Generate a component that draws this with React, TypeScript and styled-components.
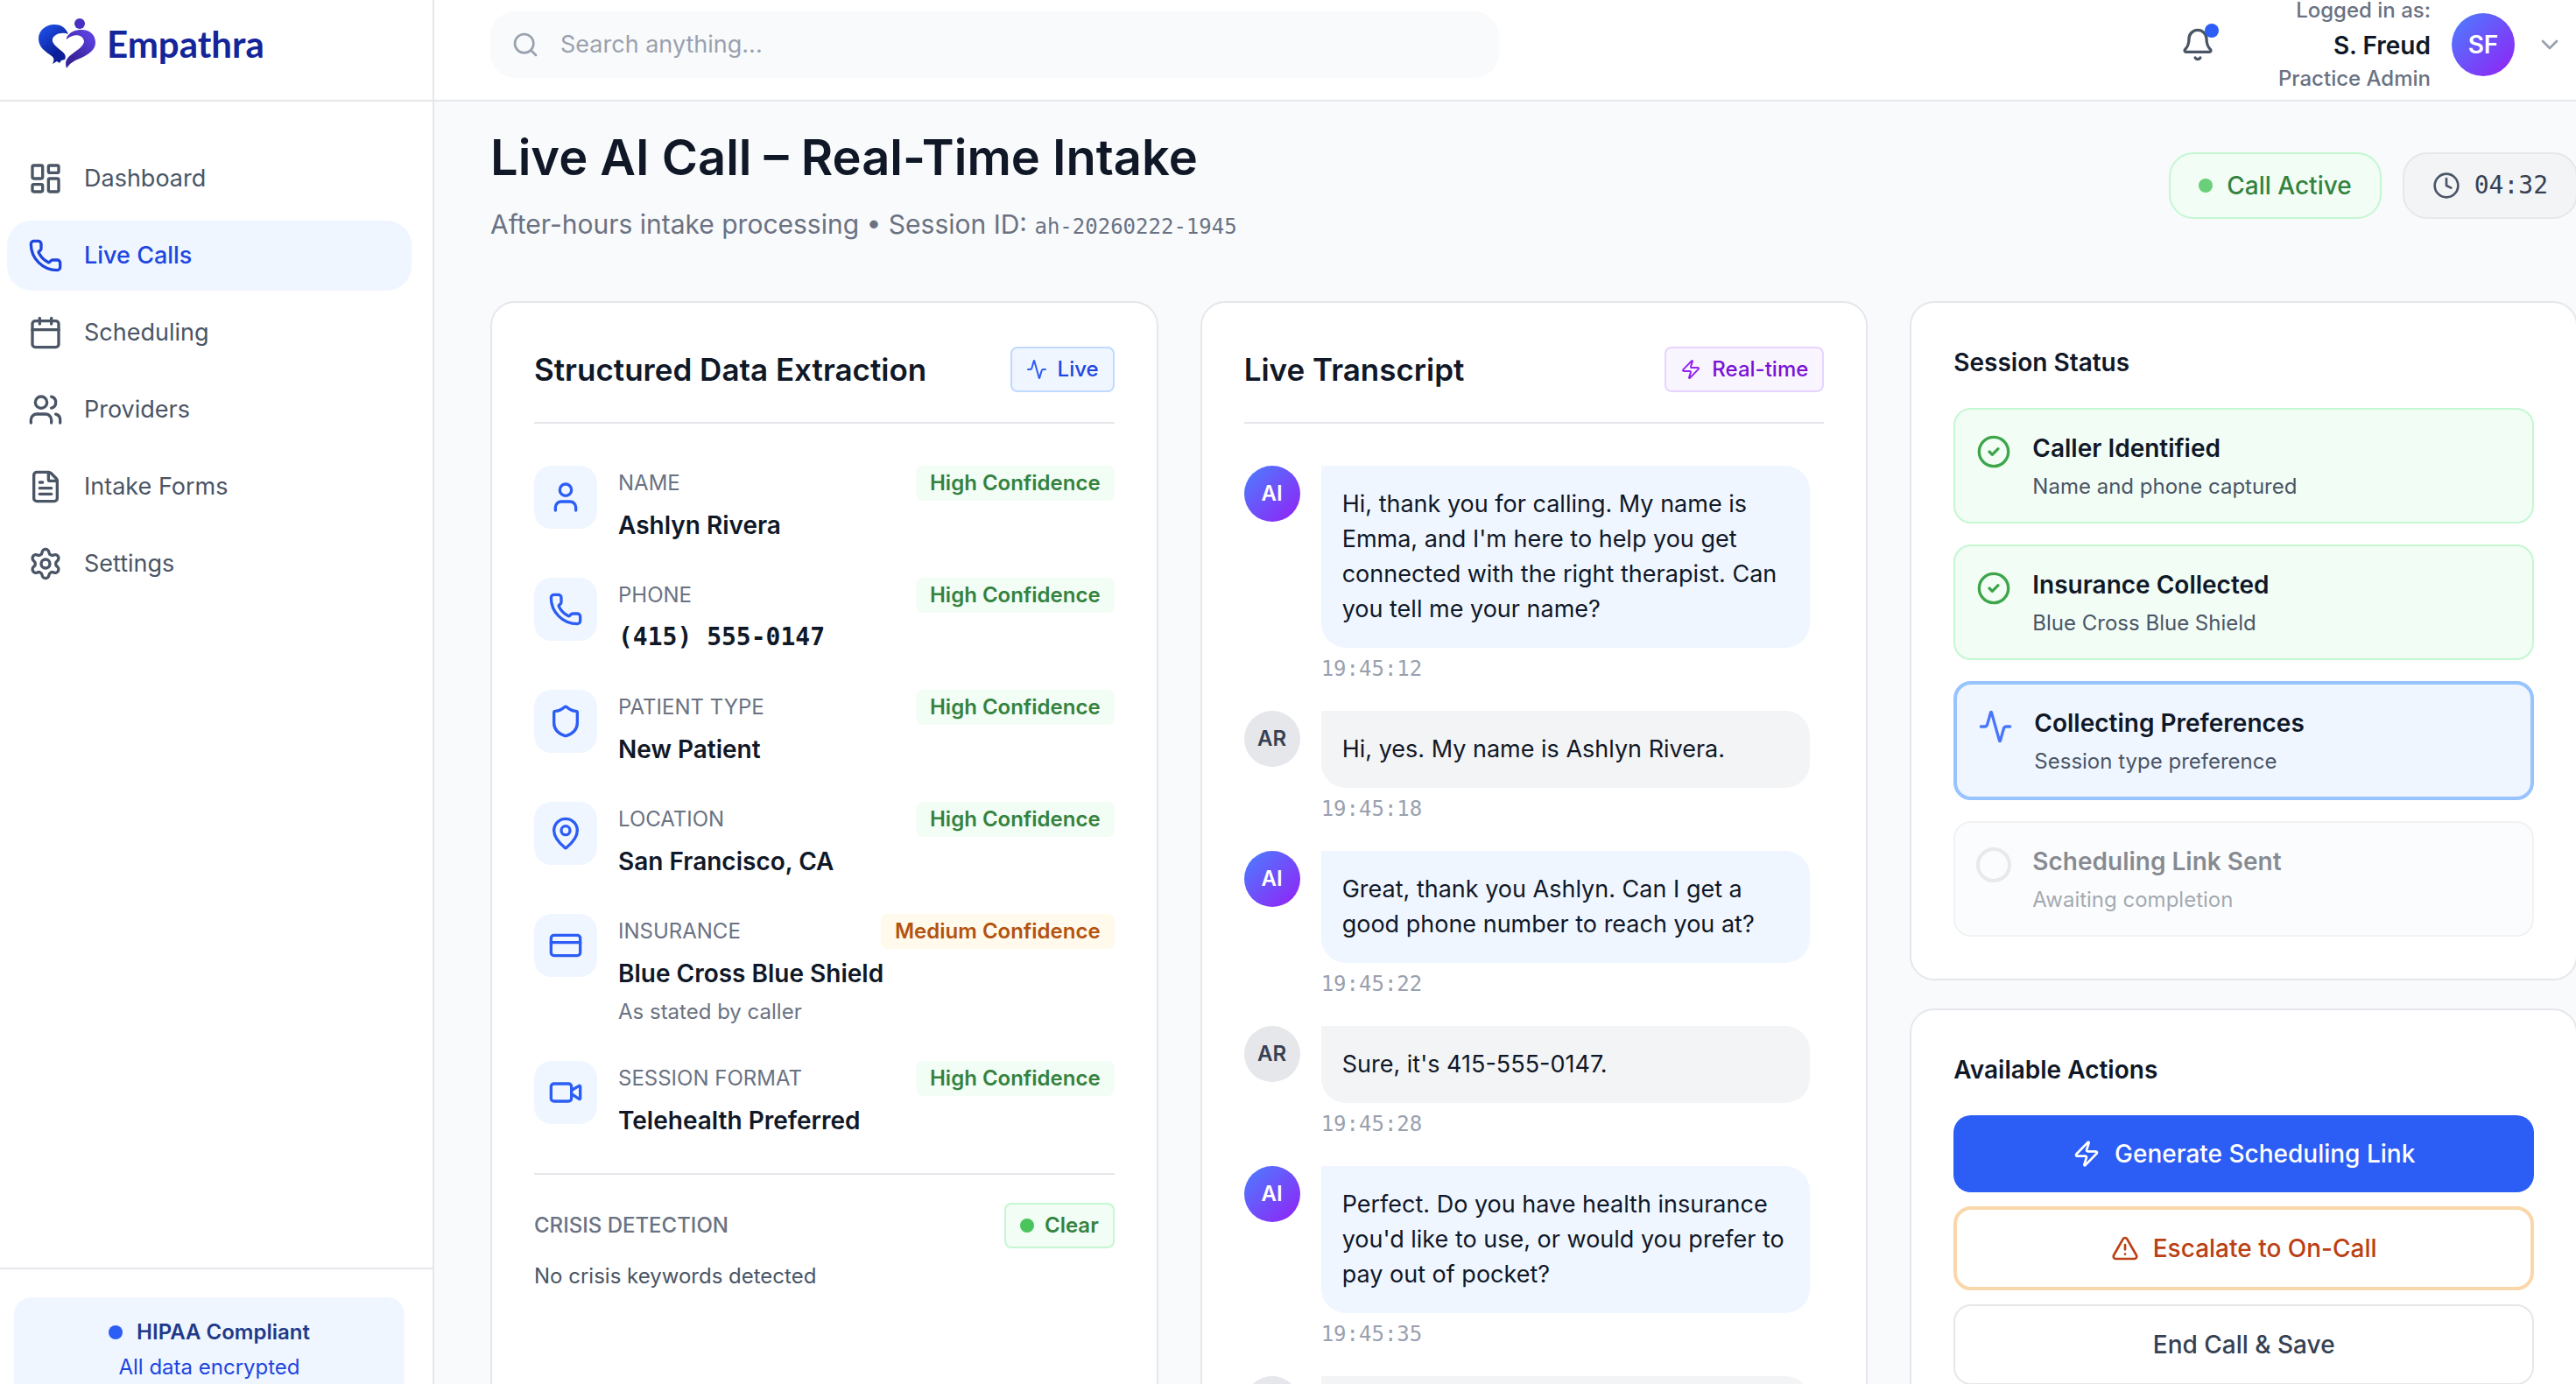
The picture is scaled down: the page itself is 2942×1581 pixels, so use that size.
import React from 'react';
import styled, { createGlobalStyle, css } from 'styled-components';
import {
  Activity, Bell, Calendar, ChevronDown, CircleCheck, Clock, CreditCard, FileText, LayoutDashboard,
  MapPin, Phone, Search, Settings, Shield, TriangleAlert, User, Users, Video, Zap,
} from 'lucide-react';

const c = {
  ink: '#101828', dark: '#364153', body: '#4a5565', muted: '#6a7282', faint: '#99a1af',
  line: '#e5e7eb', page: '#f9fafc', blue: '#2c5df5', blueText: '#2046e0', blueSoft: '#eff6ff',
  green: '#348240', greenSoft: '#f2fdf5', greenLine: '#c4f7d2',
};
const sans = `Inter, "Liberation Sans", sans-serif`;
const mono = `"DejaVu Sans Mono", "Liberation Mono", monospace`;
const gradient = 'linear-gradient(135deg, #4a80ff, #9320f5)';

const Global = createGlobalStyle`
  *, *::before, *::after { box-sizing: border-box; }
  html, body { margin: 0; height: 100%; overflow: hidden; }
  body { font-family: ${sans}; font-size: 28px; line-height: 40px; color: ${c.ink}; background: ${c.page}; }
  h1, h2, h3, p, ul, ol, dl, dd { margin: 0; padding: 0; }
  ul, ol { list-style: none; }
  button, input { font: inherit; color: inherit; }
  svg { flex: none; display: block; }
`;

const Shell = styled.div`display: flex; height: 100vh; overflow: hidden;`;
const Sidebar = styled.aside`
  flex: none; width: 496px; display: flex; flex-direction: column;
  background: #fff; border-right: 2px solid ${c.line};
`;
const Brand = styled.a`
  display: flex; align-items: center; gap: 12px; height: 116px; padding: 0 44px 14px;
  border-bottom: 2px solid ${c.line}; color: #14259a; text-decoration: none;
  font: 700 42px/48px Lato, "Open Sans", sans-serif;
`;
const Nav = styled.nav`flex: 1; padding: 48px 24px 48px 8px;`;
const NavList = styled.ul`display: flex; flex-direction: column; gap: 8px;`;
const NavLink = styled.a<{ $active?: boolean }>`
  display: flex; align-items: center; gap: 24px; height: 80px; padding: 0 24px; border-radius: 28px;
  text-decoration: none; color: ${p => (p.$active ? c.blueText : c.body)}; font-size: 27px;
  background: ${p => (p.$active ? c.blueSoft : 'transparent')};
  font-weight: ${p => (p.$active ? 500 : 400)};
`;
const SideFooter = styled.div`
  flex: none; height: 133px; padding: 32px 32px 32px 16px; border-top: 2px solid ${c.line};
`;
const Compliance = styled.div`
  padding: 24px; border-radius: 20px; background: ${c.blueSoft}; color: ${c.blueText};
  display: flex; flex-direction: column; align-items: center; gap: 8px; font-size: 24px; line-height: 32px;
`;
const ComplianceTitle = styled.strong`
  display: flex; align-items: center; gap: 16px; font-weight: 600; color: #1f3a8a;
`;
const Dot = styled.span<{ $color: string }>`
  flex: none; width: 16px; height: 16px; border-radius: 50%; background: ${p => p.$color};
`;

const Column = styled.div`flex: 1; min-width: 0; display: flex; flex-direction: column;`;
const TopBar = styled.header`
  flex: none; height: 116px; display: flex; align-items: center; justify-content: space-between;
  padding: 0 14px 12px 64px; background: #fff; border-bottom: 2px solid ${c.line};
`;
const SearchBox = styled.label`
  display: flex; align-items: center; gap: 24px; width: 1152px; height: 76px; padding: 0 24px;
  border-radius: 28px; background: ${c.page}; color: ${c.faint};
  input { flex: 1; border: 0; outline: 0; background: none; padding: 0; color: ${c.ink}; font-size: 27px; }
  input::placeholder { color: ${c.faint}; opacity: 1; }
`;
const TopActions = styled.div`display: flex; align-items: center; gap: 56px;`;
const BellButton = styled.button`
  position: relative; display: grid; place-items: center; width: 72px; height: 72px;
  border: 0; background: none; color: ${c.body}; padding: 0;
  ${Dot} { position: absolute; top: 12px; right: 12px; }
`;
const UserMenu = styled.button`
  display: flex; align-items: center; gap: 24px; border: 0; background: none; padding: 0; color: ${c.faint};
`;
const UserText = styled.span`
  display: flex; flex-direction: column; text-align: right; font-size: 24px; line-height: 24px;
  font-weight: 500; color: ${c.muted};
  strong { padding-top: 2px; font-size: 28px; line-height: 52px; font-weight: 600; color: ${c.ink}; }
`;
const Avatar = styled.span<{ $size: number; $ai?: boolean }>`
  flex: none; display: grid; place-items: center; width: ${p => p.$size}px; height: ${p => p.$size}px;
  border-radius: 50%; font-weight: 600; font-size: ${p => (p.$size > 64 ? 28 : 24)}px;
  ${p => (p.$ai ? css`background: ${gradient}; color: #fff;` : css`background: ${c.line}; color: ${c.dark};`)}
`;

const Main = styled.main`
  flex: 1; min-height: 0; margin-right: -2px; padding: 28px 0 0 64px;
  display: flex; flex-direction: column; gap: 64px;
`;
const PageHead = styled.div`flex: none; display: flex; justify-content: space-between; align-items: center;`;
const Title = styled.h1`font-size: 56px; line-height: 72px; font-weight: 600;`;
const Subtitle = styled.p`
  margin-top: 16px; font-size: 30px; line-height: 48px; color: ${c.muted};
  code { font-family: ${mono}; font-size: 24px; line-height: 24px; }
`;
const Pills = styled.div`display: flex; gap: 24px;`;
const Pill = styled.div<{ $live?: boolean }>`
  display: flex; align-items: center; gap: 16px; height: 76px; padding: 0 32px; border-radius: 28px;
  font-weight: 500; border: 2px solid ${p => (p.$live ? c.greenLine : c.line)};
  background: ${p => (p.$live ? c.greenSoft : '#f3f4f6')}; color: ${p => (p.$live ? c.green : c.body)};
  time { font-family: ${mono}; font-weight: 400; color: ${c.dark}; }
`;
const Grid = styled.div`
  flex: none; display: grid; grid-template-columns: repeat(3, minmax(0, 1fr)); gap: 48px; align-items: stretch;
`;
const Stack = styled.div`display: flex; flex-direction: column; gap: 32px;`;
const Card = styled.section`
  background: #fff; border: 2px solid ${c.line}; border-radius: 28px; padding: 48px;
`;
const CardHead = styled.div`
  display: flex; justify-content: space-between; align-items: center; padding-bottom: 32px;
  border-bottom: 2px solid ${c.line}; margin-bottom: 48px;
`;
const CardTitle = styled.h2`font-size: 35px; line-height: 56px; font-weight: 600;`;
const SmallTitle = styled.h2`font-size: 28px; line-height: 40px; font-weight: 600; margin-bottom: 32px;`;

const tagTone = {
  blue: css`background: ${c.blueSoft}; border-color: #bfd9ff; color: ${c.blueText}; svg { color: ${c.blue}; }`,
  purple: css`background: #f9f5ff; border-color: #e6d4ff; color: #7a12d6; svg { color: #9323f5; }`,
  green: css`background: ${c.greenSoft}; border-color: ${c.greenLine}; color: ${c.green}; font-weight: 600;`,
};
const Tag = styled.span<{ $tone: keyof typeof tagTone }>`
  display: inline-flex; align-items: center; gap: 12px; height: 52px; padding: 0 16px;
  border: 2px solid; border-radius: 8px; font-size: 24px; line-height: 32px; font-weight: 500;
  ${p => tagTone[p.$tone]}
`;

const Fields = styled.dl`display: flex; flex-direction: column; gap: 40px; margin: 0;`;
const Field = styled.div`display: flex; gap: 24px; align-items: flex-start;`;
const FieldIcon = styled.span`
  flex: none; display: grid; place-items: center; width: 72px; height: 72px; border-radius: 20px;
  background: ${c.blueSoft}; color: ${c.blue};
`;
const FieldBody = styled.div`flex: 1; min-width: 0;`;
const FieldTop = styled.dt`display: flex; justify-content: space-between; align-items: center; height: 40px;`;
const Label = styled.span`font-size: 24px; line-height: 32px; text-transform: uppercase; color: ${c.muted};`;
const Confidence = styled.span<{ $medium?: boolean }>`
  padding: 4px 16px; border-radius: 8px; font-size: 24px; line-height: 32px; font-weight: 600;
  background: ${p => (p.$medium ? '#fffaeb' : c.greenSoft)}; color: ${p => (p.$medium ? '#b4530f' : c.green)};
`;
const Value = styled.dd<{ $mono?: boolean }>`
  margin-top: 8px; font-weight: 600;
  ${p => p.$mono && css`font-family: ${mono}; font-weight: 700;`}
`;
const Note = styled.dd`margin-top: 8px; font-size: 24px; line-height: 32px; color: ${c.muted};`;
const Crisis = styled.div`margin-top: 40px; padding-top: 32px; border-top: 2px solid ${c.line};`;
const CrisisRow = styled.div`display: flex; justify-content: space-between; align-items: center;`;
const CrisisTitle = styled.h3`
  font-size: 24px; line-height: 32px; font-weight: 500; text-transform: uppercase; color: ${c.muted};
`;
const CrisisText = styled.p`margin-top: 16px; font-size: 24px; line-height: 32px; color: ${c.body};`;

const Messages = styled.ol`display: flex; flex-direction: column; gap: 32px; padding-right: 16px;`;
const Message = styled.li`display: flex; align-items: flex-start; gap: 24px;`;
const MessageBody = styled.div`flex: 1; min-width: 0;`;
const Bubble = styled.p<{ $ai?: boolean }>`
  padding: 24px; border-radius: 0 28px 28px 28px; font-size: 27px;
  background: ${p => (p.$ai ? c.blueSoft : '#f3f4f6')};
`;
const Stamp = styled.time`
  display: block; margin-top: 8px; font-family: ${mono}; font-size: 24px; line-height: 32px; color: ${c.faint};
`;

const Steps = styled.ul`display: flex; flex-direction: column; gap: 24px;`;
type State = 'done' | 'active' | 'pending';
const stepTone = {
  done: css`border: 2px solid ${c.greenLine}; background: ${c.greenSoft}; svg { color: #3da54a; }`,
  active: css`border: 4px solid #97c3ff; background: ${c.blueSoft}; svg { color: #4a76fa; }`,
  pending: css`border: 2px solid ${c.line}; background: ${c.page}; opacity: 0.5;`,
};
const Step = styled.li<{ $state: State }>`
  display: flex; align-items: flex-start; gap: 24px; padding: 24px; border-radius: 20px;
  ${p => stepTone[p.$state]}
`;
const StepIcon = styled.span`flex: none; margin-top: 4px;`;
const Ring = styled.span`
  display: block; width: 40px; height: 40px; border: 4px solid #d1d5dc; border-radius: 50%;
`;
const StepTitle = styled.h3`font-size: 28px; line-height: 40px; font-weight: 600;`;
const StepText = styled.p`margin-top: 8px; font-size: 24px; line-height: 32px; color: ${c.body};`;

const Actions = styled.div`display: flex; flex-direction: column; gap: 16px;`;
const actionTone = {
  primary: css`border: 0; background: ${c.blue}; color: #fff;`,
  warn: css`border: 4px solid #fad7aa; background: #fff; color: #bb4013;`,
  plain: css`border: 2px solid ${c.line}; background: #fff; color: ${c.dark};`,
};
const Action = styled.button<{ $tone: keyof typeof actionTone }>`
  display: flex; align-items: center; justify-content: center; gap: 16px; padding: 24px;
  border-radius: 20px; font-weight: 500;
  ${p => actionTone[p.$tone]}
`;

const Logo = () => (
  <svg width="66" height="58" viewBox="0 0 66 58" aria-hidden="true">
    <defs>
      <linearGradient id="left" x1="0" y1="0" x2="0.6" y2="1">
        <stop offset="0.2" stopColor="#1a49dc" /><stop offset="0.8" stopColor="#0c1f98" />
      </linearGradient>
      <linearGradient id="right" x1="1" y1="0" x2="0.2" y2="1">
        <stop offset="0.2" stopColor="#5b3fdc" /><stop offset="0.8" stopColor="#3a249c" />
      </linearGradient>
    </defs>
    <path fill="url(#left)" d="M34 18C31 10 25 7 18 7C8 7 0 14 0 23C0 33 8 38 15 43C18 45 18 48 16 52L21 49L24 51L26 48L30 47C32 43 30 40 26 37C20 32 15 28 16 24C17 18 27 15 34 18Z" />
    <path fill="url(#right)" d="M32 22C36 15 42 13 49 13C59 13 65 19 65 28C65 36 57 41 49 45C41 48 36 51 32 57C30 50 31 46 38 41C46 35 52 31 52 26C51 19 41 16 32 24Z" />
    <circle cx="47" cy="6" r="6" fill="#4a30c0" />
  </svg>
);

const navItems = [
  { icon: LayoutDashboard, label: 'Dashboard' },
  { icon: Phone, label: 'Live Calls', active: true },
  { icon: Calendar, label: 'Scheduling' },
  { icon: Users, label: 'Providers' },
  { icon: FileText, label: 'Intake Forms' },
  { icon: Settings, label: 'Settings' },
];
const fields = [
  { icon: User, label: 'Name', value: 'Ashlyn Rivera' },
  { icon: Phone, label: 'Phone', value: '(415) 555-0147', mono: true },
  { icon: Shield, label: 'Patient Type', value: 'New Patient' },
  { icon: MapPin, label: 'Location', value: 'San Francisco, CA' },
  { icon: CreditCard, label: 'Insurance', value: 'Blue Cross Blue Shield', medium: true, note: 'As stated by caller' },
  { icon: Video, label: 'Session Format', value: 'Telehealth Preferred' },
];
const messages = [
  { ai: true, time: '19:45:12', text: "Hi, thank you for calling. My name is Emma, and I'm here to help you get connected with the right therapist. Can you tell me your name?" },
  { ai: false, time: '19:45:18', text: 'Hi, yes. My name is Ashlyn Rivera.' },
  { ai: true, time: '19:45:22', text: 'Great, thank you Ashlyn. Can I get a good phone number to reach you at?' },
  { ai: false, time: '19:45:28', text: "Sure, it's 415-555-0147." },
  { ai: true, time: '19:45:35', text: "Perfect. Do you have health insurance you'd like to use, or would you prefer to pay out of pocket?" },
  { ai: false, time: '', text: '\u00a0' },
];
const steps: { state: State; title: string; text: string }[] = [
  { state: 'done', title: 'Caller Identified', text: 'Name and phone captured' },
  { state: 'done', title: 'Insurance Collected', text: 'Blue Cross Blue Shield' },
  { state: 'active', title: 'Collecting Preferences', text: 'Session type preference' },
  { state: 'pending', title: 'Scheduling Link Sent', text: 'Awaiting completion' },
];

export default function App() {
  return (
    <Shell>
      <Global />
      <Sidebar>
        <Brand href="#"><Logo />Empathra</Brand>
        <Nav>
          <NavList>
            {navItems.map(({ icon: Icon, label, active }) => (
              <li key={label}>
                <NavLink href="#" $active={active} aria-current={active ? 'page' : undefined}>
                  <Icon size={40} />{label}
                </NavLink>
              </li>
            ))}
          </NavList>
        </Nav>
        <SideFooter>
          <Compliance>
            <ComplianceTitle><Dot $color={c.blue} />HIPAA Compliant</ComplianceTitle>
            <span>All data encrypted</span>
          </Compliance>
        </SideFooter>
      </Sidebar>
      <Column>
        <TopBar>
          <SearchBox>
            <Search size={32} />
            <input type="search" placeholder="Search anything..." aria-label="Search" />
          </SearchBox>
          <TopActions>
            <BellButton aria-label="Notifications"><Bell size={40} /><Dot $color={c.blue} /></BellButton>
            <UserMenu>
              <UserText><span>Logged in as:</span><strong>S. Freud</strong><span>Practice Admin</span></UserText>
              <Avatar $size={72} $ai>SF</Avatar>
              <ChevronDown size={32} />
            </UserMenu>
          </TopActions>
        </TopBar>
        <Main>
          <PageHead>
            <div>
              <Title>Live AI Call – Real-Time Intake</Title>
              <Subtitle>After-hours intake processing • Session ID: <code>ah-20260222-1945</code></Subtitle>
            </div>
            <Pills>
              <Pill $live><Dot $color="#69cf78" />Call Active</Pill>
              <Pill><Clock size={32} /><time>04:32</time></Pill>
            </Pills>
          </PageHead>
          <Grid>
            <Card>
              <CardHead>
                <CardTitle>Structured Data Extraction</CardTitle>
                <Tag $tone="blue"><Activity size={24} />Live</Tag>
              </CardHead>
              <Fields>
                {fields.map(({ icon: Icon, label, value, mono: m, medium, note }) => (
                  <Field key={label}>
                    <FieldIcon><Icon size={40} /></FieldIcon>
                    <FieldBody>
                      <FieldTop>
                        <Label>{label}</Label>
                        <Confidence $medium={medium}>{medium ? 'Medium' : 'High'} Confidence</Confidence>
                      </FieldTop>
                      <Value $mono={m}>{value}</Value>
                      {note && <Note>{note}</Note>}
                    </FieldBody>
                  </Field>
                ))}
              </Fields>
              <Crisis>
                <CrisisRow>
                  <CrisisTitle>Crisis Detection</CrisisTitle>
                  <Tag $tone="green"><Dot $color="#4ac55c" />Clear</Tag>
                </CrisisRow>
                <CrisisText>No crisis keywords detected</CrisisText>
              </Crisis>
            </Card>
            <Card>
              <CardHead>
                <CardTitle>Live Transcript</CardTitle>
                <Tag $tone="purple"><Zap size={24} />Real-time</Tag>
              </CardHead>
              <Messages>
                {messages.map((m, i) => (
                  <Message key={i}>
                    <Avatar $size={64} $ai={m.ai}>{m.ai ? 'AI' : 'AR'}</Avatar>
                    <MessageBody>
                      <Bubble $ai={m.ai}>{m.text}</Bubble>
                      {m.time && <Stamp>{m.time}</Stamp>}
                    </MessageBody>
                  </Message>
                ))}
              </Messages>
            </Card>
            <Stack>
              <Card>
                <SmallTitle>Session Status</SmallTitle>
                <Steps>
                  {steps.map(s => (
                    <Step key={s.title} $state={s.state}>
                      <StepIcon>
                        {s.state === 'done' && <CircleCheck size={40} />}
                        {s.state === 'active' && <Activity size={40} />}
                        {s.state === 'pending' && <Ring />}
                      </StepIcon>
                      <div>
                        <StepTitle>{s.title}</StepTitle>
                        <StepText>{s.text}</StepText>
                      </div>
                    </Step>
                  ))}
                </Steps>
              </Card>
              <Card>
                <SmallTitle>Available Actions</SmallTitle>
                <Actions>
                  <Action $tone="primary"><Zap size={32} />Generate Scheduling Link</Action>
                  <Action $tone="warn"><TriangleAlert size={32} />Escalate to On-Call</Action>
                  <Action $tone="plain">End Call &amp; Save</Action>
                </Actions>
              </Card>
            </Stack>
          </Grid>
        </Main>
      </Column>
    </Shell>
  );
}
